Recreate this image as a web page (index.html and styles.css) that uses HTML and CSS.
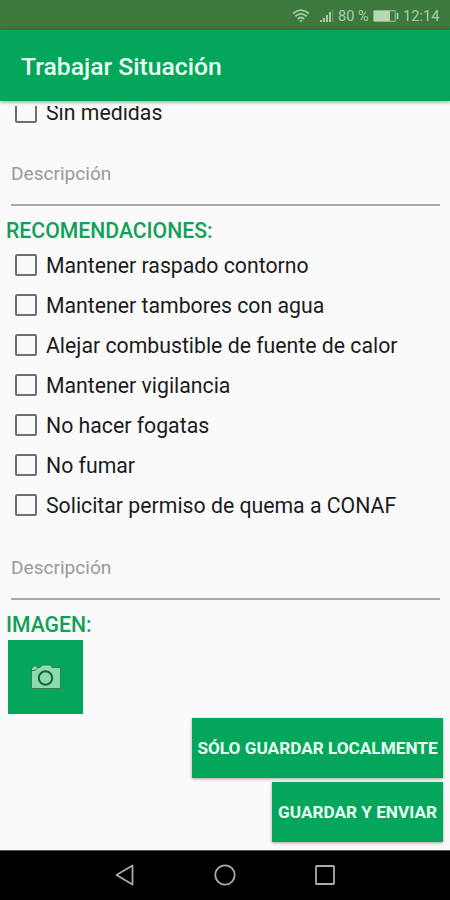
FILE: index.html
```html
<!DOCTYPE html>
<html lang="es">
<head>
<meta charset="utf-8">
<title>Trabajar Situación</title>
<link rel="stylesheet" href="styles.css">
</head>
<body>
<div class="screen">
  <div class="status">
    <svg class="wifi" width="18" height="16" viewBox="0 0 18 16" fill="none" stroke="#a9cbaa" stroke-width="1.8">
      <path d="M1 5.5Q9-1.2 17 5.5M3.4 8.3Q9 3.4 14.6 8.3M5.8 11Q9 8 12.2 11"/>
      <path d="M7.2 12.3h3.6L9 14.5z" fill="#a9cbaa" stroke="none"/>
    </svg>
    <svg class="signal" width="14" height="14" viewBox="0 0 14 14" fill="#a9cbaa">
      <path d="M0 11h2v2H0zM3 9h2v4H3zM6 6h2v7H6zM9 3h2v10H9z"/><path d="M12.3 0h1v13h-1z" opacity=".45"/>
    </svg>
    <span class="percent">80 %</span>
    <svg class="battery" width="26" height="12" viewBox="0 0 26 12" fill="none">
      <rect x=".7" y=".7" width="21.6" height="10.6" rx="1" stroke="#8ebc8f" stroke-width="1.2"/>
      <path d="M1 1h16v10H1z" fill="#b4d6b4"/><path d="M24.5 3v6" stroke="#a9cbaa" stroke-width="1.8"/>
    </svg>
    <span class="clock">12:14</span>
  </div>
  <header class="appbar"><h1>Trabajar Situación</h1></header>
  <main class="content">
    <div class="scroller">
      <label class="option clipped"><i class="box"></i><span>Sin medidas</span></label>
      <div class="field first"><span>Descripción</span></div>
      <h2 class="rec">RECOMENDACIONES:</h2>
      <label class="option"><i class="box"></i><span>Mantener raspado contorno</span></label>
      <label class="option"><i class="box"></i><span>Mantener tambores con agua</span></label>
      <label class="option"><i class="box"></i><span>Alejar combustible de fuente de calor</span></label>
      <label class="option"><i class="box"></i><span>Mantener vigilancia</span></label>
      <label class="option"><i class="box"></i><span>No hacer fogatas</span></label>
      <label class="option"><i class="box"></i><span>No fumar</span></label>
      <label class="option"><i class="box"></i><span>Solicitar permiso de quema a CONAF</span></label>
      <div class="field"><span>Descripción</span></div>
      <h2 class="img">IMAGEN:</h2>
      <button class="photo" aria-label="Cámara">
        <svg width="32" height="26" viewBox="0 0 32 26">
          <path d="M1.5 3.5V24.5H30.5V3.5H22L20.5 1H12L10 3.5H7V2H3v1.5z" fill="#8bdcac" stroke="#397c55" stroke-width="1"/>
          <path d="M2 6.5h3l3-3" fill="none" stroke="#397c55"/>
          <circle cx="15.5" cy="14" r="6.7" fill="#8bdcac" stroke="#17603a" stroke-width="2"/>
        </svg>
      </button>
      <div class="actions">
        <button class="action save">SÓLO GUARDAR LOCALMENTE</button>
        <button class="action send">GUARDAR Y ENVIAR</button>
      </div>
    </div>
  </main>
  <nav class="navbar">
    <svg width="22" height="24" viewBox="0 0 22 24"><path d="M2.5 12L18.5 2.5v19z"/></svg>
    <svg width="22" height="24" viewBox="0 0 22 24"><circle cx="11" cy="12" r="9.7"/></svg>
    <svg width="22" height="24" viewBox="0 0 22 24"><rect x="2" y="3" width="18" height="18" rx=".6"/></svg>
  </nav>
</div>
</body>
</html>
```
FILE: styles.css
```css
* { box-sizing: border-box; }
body { margin: 0; font-family: Roboto, "Liberation Sans", sans-serif; }
h1, h2 { margin: 0; }
button { border: 0; padding: 0; font-family: inherit; }
.screen { width: 450px; height: 900px; display: flex; flex-direction: column; overflow: hidden; background: #fafafa; }
.status { height: 30px; flex: none; display: flex; align-items: center; justify-content: flex-end; padding: 2px 10px 0 0; background: #3d783d; color: #acceac; font-size: 14.5px; white-space: nowrap; }
.wifi { margin-right: 10px; }
.signal { margin-right: 4px; }
.percent { width: 31px; margin-right: 4px; }
.battery { margin-right: 4px; }
.clock { width: 37px; font-size: 14.7px; }
.appbar { height: 71px; flex: none; display: flex; align-items: center; padding: 2px 0 0 21px; background: #03a65a; color: #eafff3; box-shadow: 0 1px 4px rgba(0,0,0,.4); z-index: 1; }
.appbar h1 { font-size: 24.7px; font-weight: 500; white-space: nowrap; }
.content { flex: none; height: 749px; padding-top: 5px; }
.scroller { height: 744px; overflow: hidden; display: flex; flex-direction: column; }
.option { height: 40px; flex: none; display: flex; align-items: center; padding-left: 15px; gap: 9px; font-size: 21.25px; color: #1b1b1b; white-space: nowrap; }
.option.clipped { margin-top: -14px; }
.box { width: 22px; height: 22px; flex: none; margin-top: -1px; border: 2px solid #707070; border-radius: 2px; }
.field { height: 75px; flex: none; margin: 0 10px 0 11px; padding-top: 31px; border-bottom: 2px solid #aaa; color: #999; font-size: 19.1px; line-height: 24px; }
.field.first { height: 74px; padding-top: 30px; }
h2 { flex: none; padding-left: 6px; color: #129f58; font-size: 21.2px; line-height: 24px; font-weight: 500; white-space: nowrap; }
.rec { height: 39px; padding-top: 13px; }
.img { height: 40px; padding-top: 13px; }
.photo { width: 75px; height: 74px; flex: none; margin-left: 8px; display: flex; align-items: center; justify-content: center; background: #03a65a; }
.actions { display: flex; flex-direction: column; align-items: flex-end; gap: 4px; margin-top: 4px; padding-right: 7px; }
.action { height: 60px; background: #03a65a; color: #eafff3; font-size: 17.2px; font-weight: 700; white-space: nowrap; box-shadow: 0 1px 3px rgba(0,0,0,.35); }
.save { width: 251px; }
.send { width: 171px; }
.navbar { flex: none; height: 50px; display: flex; align-items: center; justify-content: center; gap: 78px; background: #000; border-top: 1px solid #555; }
.navbar svg { margin-top: -1px; fill: none; stroke: #aaa; stroke-width: 1.8; stroke-linejoin: round; }
```
